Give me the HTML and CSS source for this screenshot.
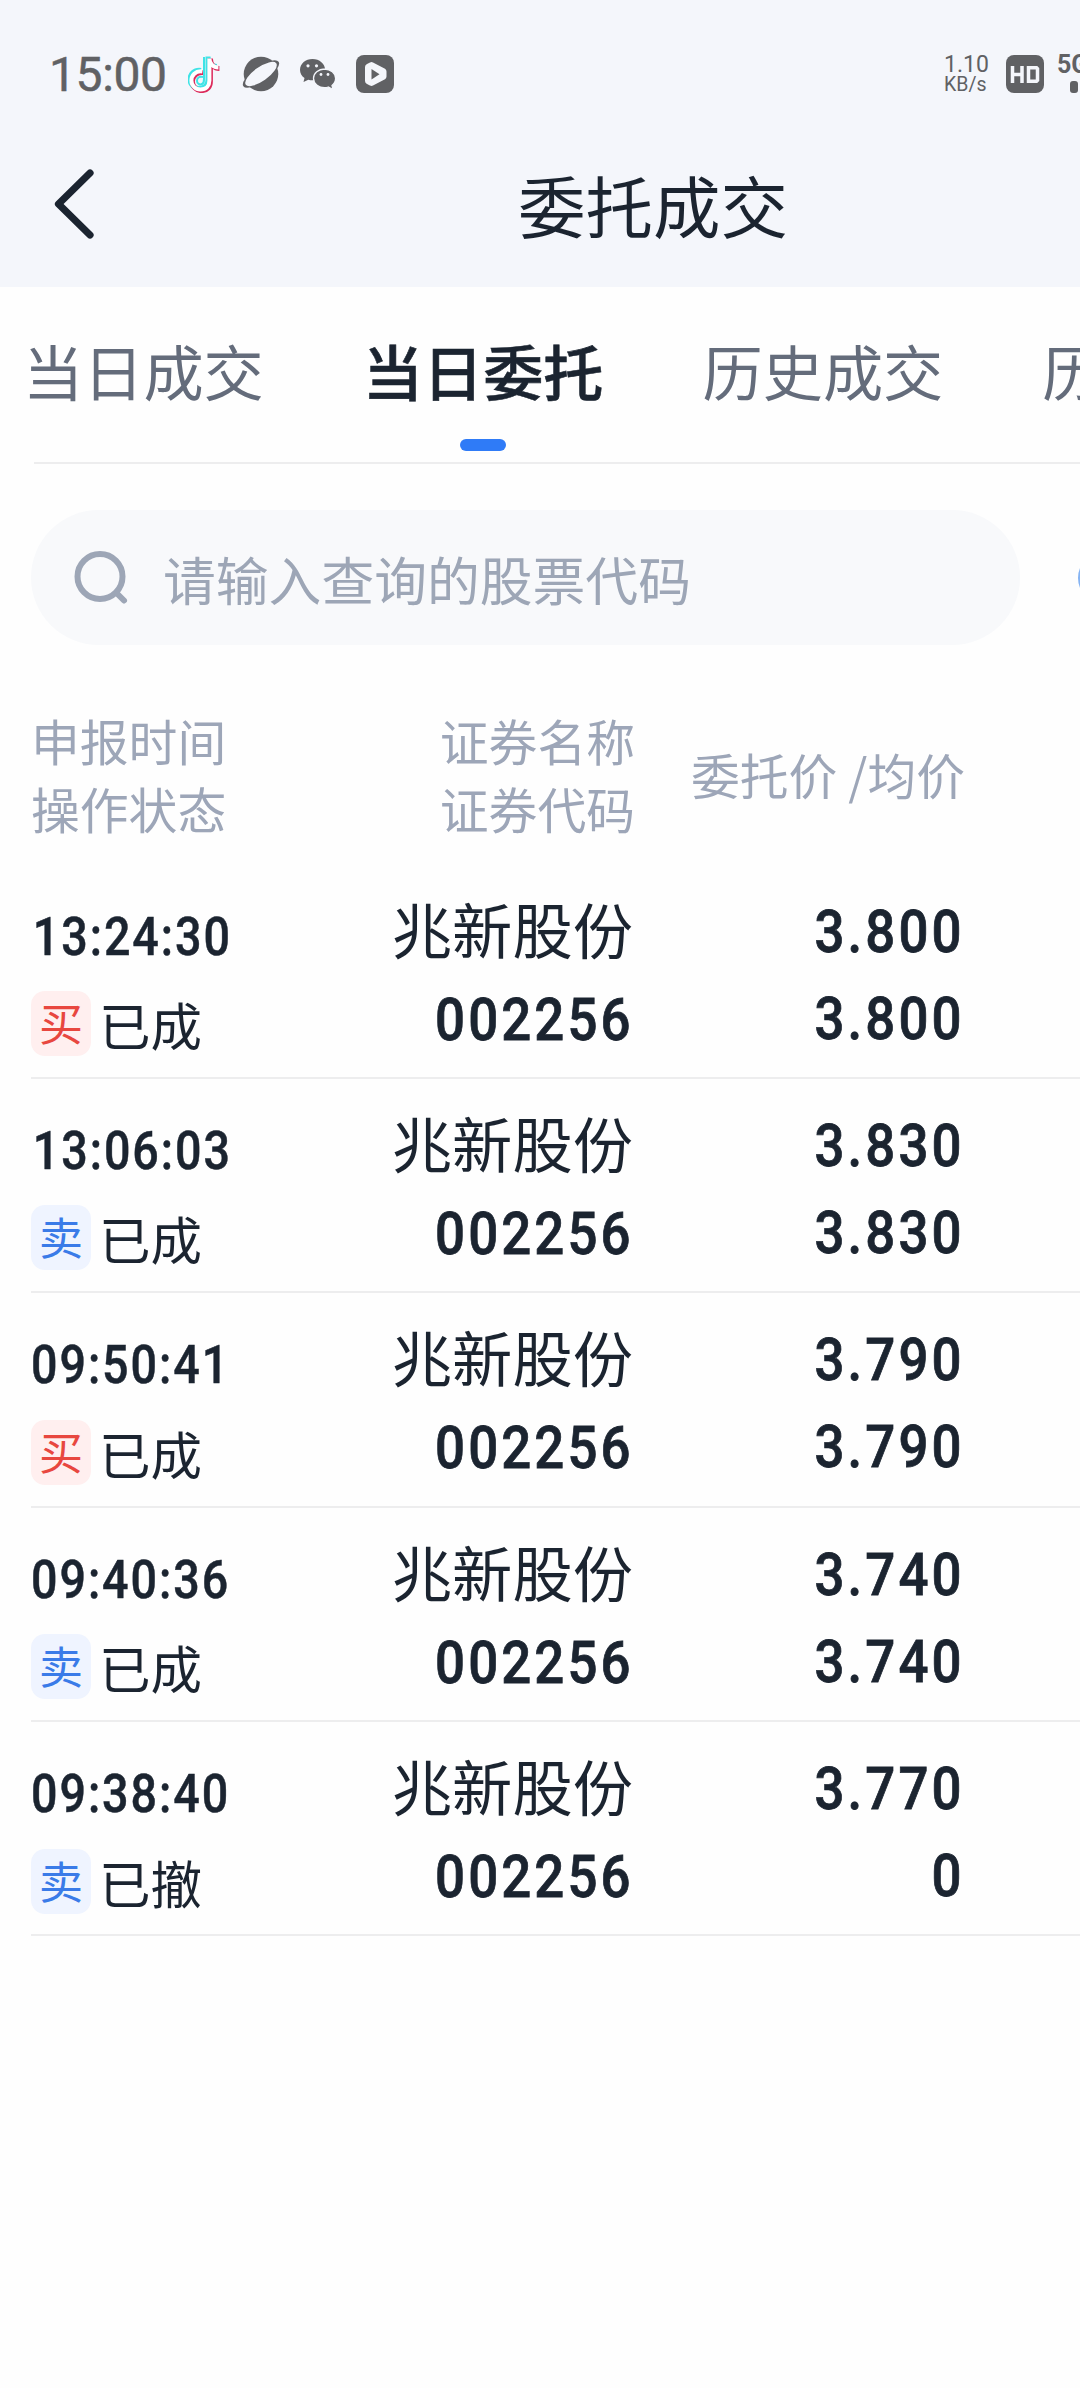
FILE: index.html
```html
<!DOCTYPE html>
<html lang="zh-CN">
<head>
<meta charset="utf-8">
<title>委托成交</title>
<link rel="stylesheet" href="styles.css">
</head>
<body>
<header class="top">
  <div class="status">
    <span class="clock">15:00</span>
    <svg class="ic-note" viewBox="0 0 32 38" width="32" height="38" fill="none" stroke-width="5">
      <path d="M14 16C7 15 3 20 3 25c0 5 4 9 9 9 6 0 9-4 9-9V2c0 6 4 10 9 10" transform="translate(-1 -.6)" stroke="#3fe3e6"/>
      <path d="M14 16C7 15 3 20 3 25c0 5 4 9 9 9 6 0 9-4 9-9V2c0 6 4 10 9 10" transform="translate(1.4 1.6)" stroke="#dc2a5b"/>
      <path d="M14 16C7 15 3 20 3 25c0 5 4 9 9 9 6 0 9-4 9-9V3c0 5 4 9 9 9" transform="translate(.4 .5)" stroke="#fff" stroke-width="4"/>
      <path d="M15 22c-4-1-6 1-6 4s3 4 5 3 2-2 2-5V2" stroke="#3fe3e6" stroke-width="2"/>
    </svg>
    <svg class="ic-planet" viewBox="0 0 40 38" width="40" height="38">
      <circle cx="20" cy="19" r="17.3" fill="#606164"/>
      <ellipse cx="20" cy="19" rx="21.5" ry="7.6" transform="rotate(-35 20 19)" fill="#606164"/>
      <ellipse cx="20" cy="19" rx="18.6" ry="7" transform="rotate(-35 20 19)" fill="#f4f6fb"/>
    </svg>
    <svg class="ic-chat" viewBox="0 0 36 32" width="36" height="32">
      <path d="M12.500 1C5.500 1 0 5.600 0 11.800c0 3.600 1.700 6.300 4.500 8.300L3.500 24l4.800-2.300c1.300.4 2.800.6 4.200.6 7 0 12.500-4.500 12.500-10.500S19.500 1 12.500 1z" fill="#606164"/>
      <path d="M24.500 11c-6.100 0-11 4-11 9.300s4.900 9.300 11 9.300c1.400 0 2.600-.2 3.800-.6L33 31.500l-1-4c2.200-1.700 3.600-4.200 3.600-7.200C35.600 15 30.600 11 24.500 11z" fill="#606164" stroke="#f4f6fb" stroke-width="1.300"/>
      <g fill="#f4f6fb"><circle cx="8" cy="7.800" r="1.600"/><circle cx="16.500" cy="7.800" r="1.600"/><circle cx="21" cy="16.500" r="1.400"/><circle cx="28" cy="16.500" r="1.400"/></g>
    </svg>
    <svg class="ic-play" viewBox="0 0 38 38" width="38" height="38">
      <rect width="38" height="38" rx="8" fill="#606164"/>
      <path d="M9 12q0-2 2-3l3-1.500q1.500-.8 3 0l12 6.300q1.500 1 1.500 2.700v5q0 1.700-1.500 2.700L17 30.500q-1.500.8-3 0l-3-1.500q-2-1-2-3z" fill="#f4f6fb"/>
      <path d="M15.500 14v10.500l8-5.200z" fill="#606164"/>
    </svg>
    <div class="speed"><span class="rate">1.10</span><span class="unit">KB/s</span></div>
    <svg class="ic-hd" viewBox="0 0 38 38" width="38" height="38">
      <rect width="38" height="38" rx="8" fill="#606164"/>
      <path d="M6.500 11v17M16 11v17M6.500 19.500H16M22.500 12.800h8l1 1v11.400l-1 1h-8z" fill="none" stroke="#f4f6fb" stroke-width="3.500"/>
    </svg>
    <div class="net"><span class="gen">5G</span><i class="bar"></i></div>
  </div>
  <div class="nav">
    <svg class="back" viewBox="0 0 42 72" width="42" height="72" fill="none" stroke="#1b2430" stroke-width="7.200" stroke-linecap="round" stroke-linejoin="round"><path d="M37 5 5.500 36 37 67"/></svg>
    <h1 class="title">委托成交</h1>
  </div>
</header>
<nav class="tabs">
  <span class="tab">当日成交</span>
  <span class="tab tab-on">当日委托</span>
  <span class="tab">历史成交</span>
  <span class="tab">历史委托</span>
</nav>
<div class="find">
  <div class="search">
    <svg viewBox="0 0 56 56" width="56" height="56" fill="none" stroke="#9da6b6" stroke-width="6" stroke-linecap="round"><circle cx="26" cy="26.500" r="22.500"/><path d="m43.500 44 6.500 6.500"/></svg>
    <span class="hint">请输入查询的股票代码</span>
  </div>
  <i class="ring"></i>
</div>
<main class="table">
  <div class="head">
    <div class="h-left">申报时间<br>操作状态</div>
    <div class="h-mid">证券名称<br>证券代码</div>
    <div class="h-price">委托价 /均价</div>
  </div>
  <div class="row">
    <div class="c-left"><span class="time one">13:24:30</span><div class="state"><b class="tag buy">买</b>已成</div></div>
    <div class="c-mid"><span class="name">兆新股份</span><span class="num code">002256</span></div>
    <div class="c-price"><span class="num">3.800</span><span class="num">3.800</span></div>
  </div>
  <div class="row">
    <div class="c-left"><span class="time one">13:06:03</span><div class="state"><b class="tag sell">卖</b>已成</div></div>
    <div class="c-mid"><span class="name">兆新股份</span><span class="num code">002256</span></div>
    <div class="c-price"><span class="num">3.830</span><span class="num">3.830</span></div>
  </div>
  <div class="row">
    <div class="c-left"><span class="time">09:50:41</span><div class="state"><b class="tag buy">买</b>已成</div></div>
    <div class="c-mid"><span class="name">兆新股份</span><span class="num code">002256</span></div>
    <div class="c-price"><span class="num">3.790</span><span class="num">3.790</span></div>
  </div>
  <div class="row">
    <div class="c-left"><span class="time">09:40:36</span><div class="state"><b class="tag sell">卖</b>已成</div></div>
    <div class="c-mid"><span class="name">兆新股份</span><span class="num code">002256</span></div>
    <div class="c-price"><span class="num">3.740</span><span class="num">3.740</span></div>
  </div>
  <div class="row">
    <div class="c-left"><span class="time">09:38:40</span><div class="state"><b class="tag sell">卖</b>已撤</div></div>
    <div class="c-mid"><span class="name">兆新股份</span><span class="num code">002256</span></div>
    <div class="c-price"><span class="num">3.770</span><span class="num">0</span></div>
  </div>
</main>
</body>
</html>
```

FILE: styles.css
```css
* { box-sizing: border-box; }
body {
  margin: 0;
  width: 1080px;
  height: 2388px;
  overflow: hidden;
  background: #fefefe;
  color: #1b2430;
  font-family: "Noto Sans CJK SC", sans-serif;
  white-space: nowrap;
}
svg { display: block; flex: none; }

.top { height: 287px; background: #f4f6fb; }
.status {
  display: flex;
  align-items: center;
  height: 148px;
  padding-left: 49px;
  overflow: hidden;
  color: #606164;
  font-family: Roboto, sans-serif;
}
.clock { flex: none; width: 138px; font-size: 48px; letter-spacing: -0.4px; -webkit-text-stroke: 0.5px; }
.ic-note { margin-left: 1px; }
.ic-planet { margin-left: 21px; }
.ic-chat { margin-left: 19px; }
.ic-play { margin-left: 20px; }
.speed { display: flex; flex: none; flex-direction: column; width: 62px; margin-left: 550px; }
.rate { font-size: 23px; line-height: 22px; }
.unit { font-size: 19.500px; line-height: 18px; }
.net { display: flex; flex: none; flex-direction: column; height: 38px; margin-left: 13px; }
.gen { font-size: 25px; font-weight: 700; line-height: 20px; }
.bar { width: 8px; height: 12px; margin: 6px 0 0 13px; border-radius: 3px; background: #606164; }

.nav { display: flex; align-items: center; height: 112px; padding-left: 53px; }
.title { margin: 0 0 0 423px; font-size: 67.500px; font-weight: 400; line-height: 100px; }

.tabs {
  display: flex;
  gap: 99px;
  height: 177px;
  margin-left: 34px;
  border-bottom: 2px solid #ededee;
  color: #646c7b;
  font-size: 60.200px;
  line-height: 165px;
}
.tab { display: flex; flex: none; flex-direction: column; align-items: center; }
.tab:first-child { margin-left: -11px; }
.tab-on { color: #1b2430; font-weight: 500; -webkit-text-stroke: 0.6px; }
.tab-on::after {
  content: "";
  width: 46px;
  height: 12px;
  margin-top: -13px;
  border-radius: 6px;
  background: #2f7bf7;
}

.find { display: flex; align-items: center; margin-top: 46px; padding-left: 31px; }
.search {
  display: flex;
  align-items: center;
  flex: none;
  width: 989px;
  height: 135px;
  padding-left: 43px;
  border-radius: 68px;
  background: #f8f9fb;
}
.hint { margin-left: 33px; color: #9da6b6; font-size: 52.800px; }
.ring { flex: none; width: 50px; height: 50px; margin-left: 58px; border: 4px solid #86b4f3; border-radius: 50%; }

.table { padding-left: 31px; }
.head {
  display: grid;
  grid-template-columns: 300px 304px 330px;
  align-items: center;
  height: 219.500px;
  padding-top: 44px;
  padding-bottom: 5px;
  color: #9da6b8;
  font-size: 48.800px;
  line-height: 68px;
}
.h-mid, .h-price { text-align: right; }

.row {
  display: grid;
  grid-template-columns: 300px 302px 331px;
  height: 214.400px;
  border-bottom: 2px solid #ededee;
}
.c-left, .c-mid, .c-price { display: flex; flex-direction: column; }
.c-mid, .c-price { align-items: flex-end; }
.c-left { padding-top: 29px; }
.c-mid { padding-top: 20px; }
.c-price { padding-top: 23px; }
/* Figures are set condensed, with open tracking. */
.time {
  font: 500 53px/86px Roboto, sans-serif;
  letter-spacing: 2.200px;
  -webkit-text-stroke: 0.5px;
  transform: scaleX(0.88);
  transform-origin: left;
}
.one { padding-left: 2px; }
.state { display: flex; align-items: center; height: 88px; font-size: 51.500px; }
.tag {
  width: 60px;
  height: 65px;
  margin-right: 8px;
  border-radius: 14px;
  font-size: 44px;
  font-weight: 400;
  line-height: 62px;
  text-align: center;
}
.buy { background: #ffefef; color: #e8473f; }
.sell { background: #eff4ff; color: #3a7be8; }
.name { font-size: 60.300px; line-height: 86px; }
.num {
  font: 500 60px/87px Roboto, sans-serif;
  letter-spacing: 3.500px;
  margin-right: -1px;
  -webkit-text-stroke: 0.8px;
  transform: scaleX(0.88);
  transform-origin: right;
}
.code { line-height: 97px; }
```
